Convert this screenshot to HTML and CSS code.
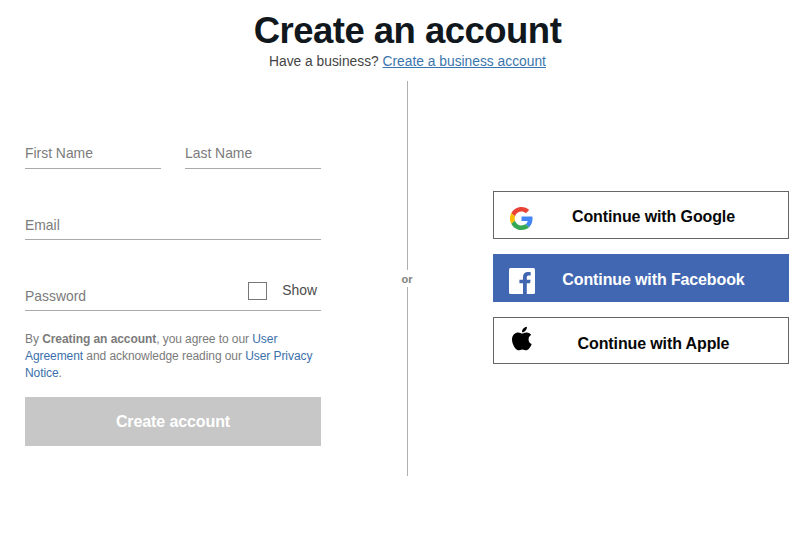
FILE: index.html
```html
<!DOCTYPE html>
<html lang="en">
<head>
<meta charset="utf-8">
<title>Create an account</title>
<link rel="stylesheet" href="styles.css">
</head>
<body>
<header class="header">
  <h1 class="title">Create an account</h1>
  <p class="subtitle">Have a business? <a class="business-link" href="#">Create a business account</a></p>
</header>
<main class="content">
  <form class="form">
    <div class="names">
      <label class="field">First Name</label>
      <label class="field">Last Name</label>
    </div>
    <label class="field email">Email</label>
    <div class="field password">
      <label>Password</label>
      <label class="show"><span class="checkbox"></span>Show</label>
    </div>
    <p class="legal">By <b>Creating an account</b>, you agree to our <a href="#">User<br>Agreement</a> and acknowledge reading our <a href="#">User Privacy<br>Notice</a>.</p>
    <button class="submit" type="button">Create account</button>
  </form>
  <div class="divider"><span class="or">or</span></div>
  <div class="social">
    <button class="social-button google" type="button">
      <svg class="icon" viewBox="0 0 48 48"><path fill="#ea4335" d="M24 9.5c3.54 0 6.71 1.22 9.21 3.6l6.85-6.85C35.9 2.38 30.47 0 24 0 14.62 0 6.51 5.38 2.56 13.22l7.98 6.19C12.43 13.72 17.74 9.5 24 9.5z"/><path fill="#4285f4" d="M46.98 24.55c0-1.57-.15-3.09-.38-4.55H24v9.02h12.94c-.58 2.96-2.26 5.48-4.78 7.18l7.73 6c4.51-4.18 7.09-10.36 7.09-17.65z"/><path fill="#fbbc05" d="M10.53 28.59a14.5 14.5 0 0 1 0-9.18l-7.98-6.19a24 24 0 0 0 0 21.56z"/><path fill="#34a853" d="M24 48c6.48 0 11.93-2.13 15.89-5.81l-7.73-6C30 37.64 27.24 38.49 24 38.49c-6.26 0-11.57-4.22-13.47-9.91l-7.98 6.19C6.51 42.62 14.62 48 24 48z"/></svg>
      <span class="caption">Continue with Google</span>
    </button>
    <button class="social-button facebook" type="button">
      <svg class="icon" viewBox="0 0 26 26"><rect width="26" height="26" rx="1.5" fill="#fff"/><path fill="#4267b2" d="M14 26V15.3h-3.6v-3.6H14V8.9C14 5.6 16 4 18.9 4c1.4 0 2.4.1 2.8.2v3.4h-2c-1.5 0-1.9.8-1.9 2v2.1h3.8l-.5 3.6h-3.3V26z"/></svg>
      <span class="caption">Continue with Facebook</span>
    </button>
    <button class="social-button apple" type="button">
      <svg class="icon" viewBox="0 0 384 470"><path d="M319 248c0-37 17-64 50-85-19-27-47-42-84-45-35-3-74 21-88 21-15 0-50-20-77-20C63 120 0 164 0 254c0 27 5 54 15 82 13 37 59 127 108 126 25-1 43-18 76-18 32 0 48 18 76 18 49-1 91-83 104-120-66-31-60-91-60-94zM262 82c27-32 25-62 24-72-24 1-52 16-68 35-18 20-28 45-26 72 26 2 50-11 70-35z"/></svg>
      <span class="caption">Continue with Apple</span>
    </button>
  </div>
</main>
</body>
</html>
```
FILE: styles.css
```css
* { box-sizing: border-box; }

body {
  margin: 0;
  width: 800px;
  height: 541px;
  overflow: hidden;
  background: #fff;
  color: #444;
  font-family: "Liberation Sans", Arial, sans-serif;
}

a { color: #3a70aa; text-decoration: none; }

.header { width: 815px; padding-top: 9px; text-align: center; }
.title { margin: 0; font-size: 36.5px; letter-spacing: -0.52px; line-height: 43px; color: #10171d; }
.subtitle { margin: 0; font-size: 13.8px; line-height: 20px; }
.business-link { color: #3a75ad; text-decoration: underline; }

.content {
  display: grid;
  grid-template-columns: 296px 172px 296px;
  margin-left: 25px;
  padding-top: 9px;
}

.form { padding-top: 63px; }
.names { display: grid; grid-template-columns: 136px 136px; gap: 24px; }
.field {
  display: block;
  height: 25px;
  border-bottom: 1px solid #aaa;
  font-size: 13.9px;
  line-height: 19px;
  color: #7b7b7b;
}
.email { margin-top: 45px; height: 26px; padding-top: 2px; }
.password {
  display: flex;
  justify-content: space-between;
  margin-top: 42px;
  height: 29px;
  padding-right: 4px;
}
.password > label:first-child { padding-top: 5px; }
.show { display: flex; gap: 15px; line-height: 17px; color: #4b4b4b; }
.checkbox { width: 19px; height: 18px; border: 1px solid #777; }

.legal { margin: 20px 0 15px; font-size: 12px; letter-spacing: -0.07px; line-height: 17px; color: #7b7b7b; white-space: nowrap; }

.submit {
  display: block;
  width: 100%;
  height: 49px;
  padding: 0;
  border: 0;
  background: #c7c7c7;
  color: #fff;
  font: bold 16px "Liberation Sans", Arial, sans-serif;
  letter-spacing: -0.1px;
}

.divider {
  display: flex;
  flex-direction: column;
  align-items: center;
  height: 395px;
}
.divider::before, .divider::after { content: ""; width: 1px; background: #b0b0b0; }
.divider::before { height: 189px; }
.divider::after { flex: 1; }
.or { height: 17px; font-size: 11px; font-weight: bold; line-height: 18px; color: #808080; }

.social { display: flex; flex-direction: column; padding-top: 110px; }
.social-button {
  display: grid;
  grid-template-columns: 56px 1fr;
  align-items: center;
  height: 48px;
  padding: 0;
  border: 1px solid #666;
  background: #fff;
  color: #080808;
  font: bold 16px "Liberation Sans", Arial, sans-serif;
  letter-spacing: -0.12px;
}
.icon { display: block; justify-self: center; }
.caption { padding-right: 31px; text-align: center; }
.google .icon { width: 23px; height: 23px; margin-top: 6px; margin-right: 1px; }
.google .caption { padding-top: 4px; }
.facebook { margin-top: 15px; border-color: #4267b2; background: #4267b2; color: #fff; }
.facebook .icon { width: 26px; height: 26px; margin-top: 5px; margin-right: 1px; }
.facebook .caption { padding-top: 4px; }
.apple { height: 47px; margin-top: 15px; }
.apple .icon { width: 20px; height: 25px; margin-top: -5px; }
.apple .caption { padding-top: 6px; }
```
